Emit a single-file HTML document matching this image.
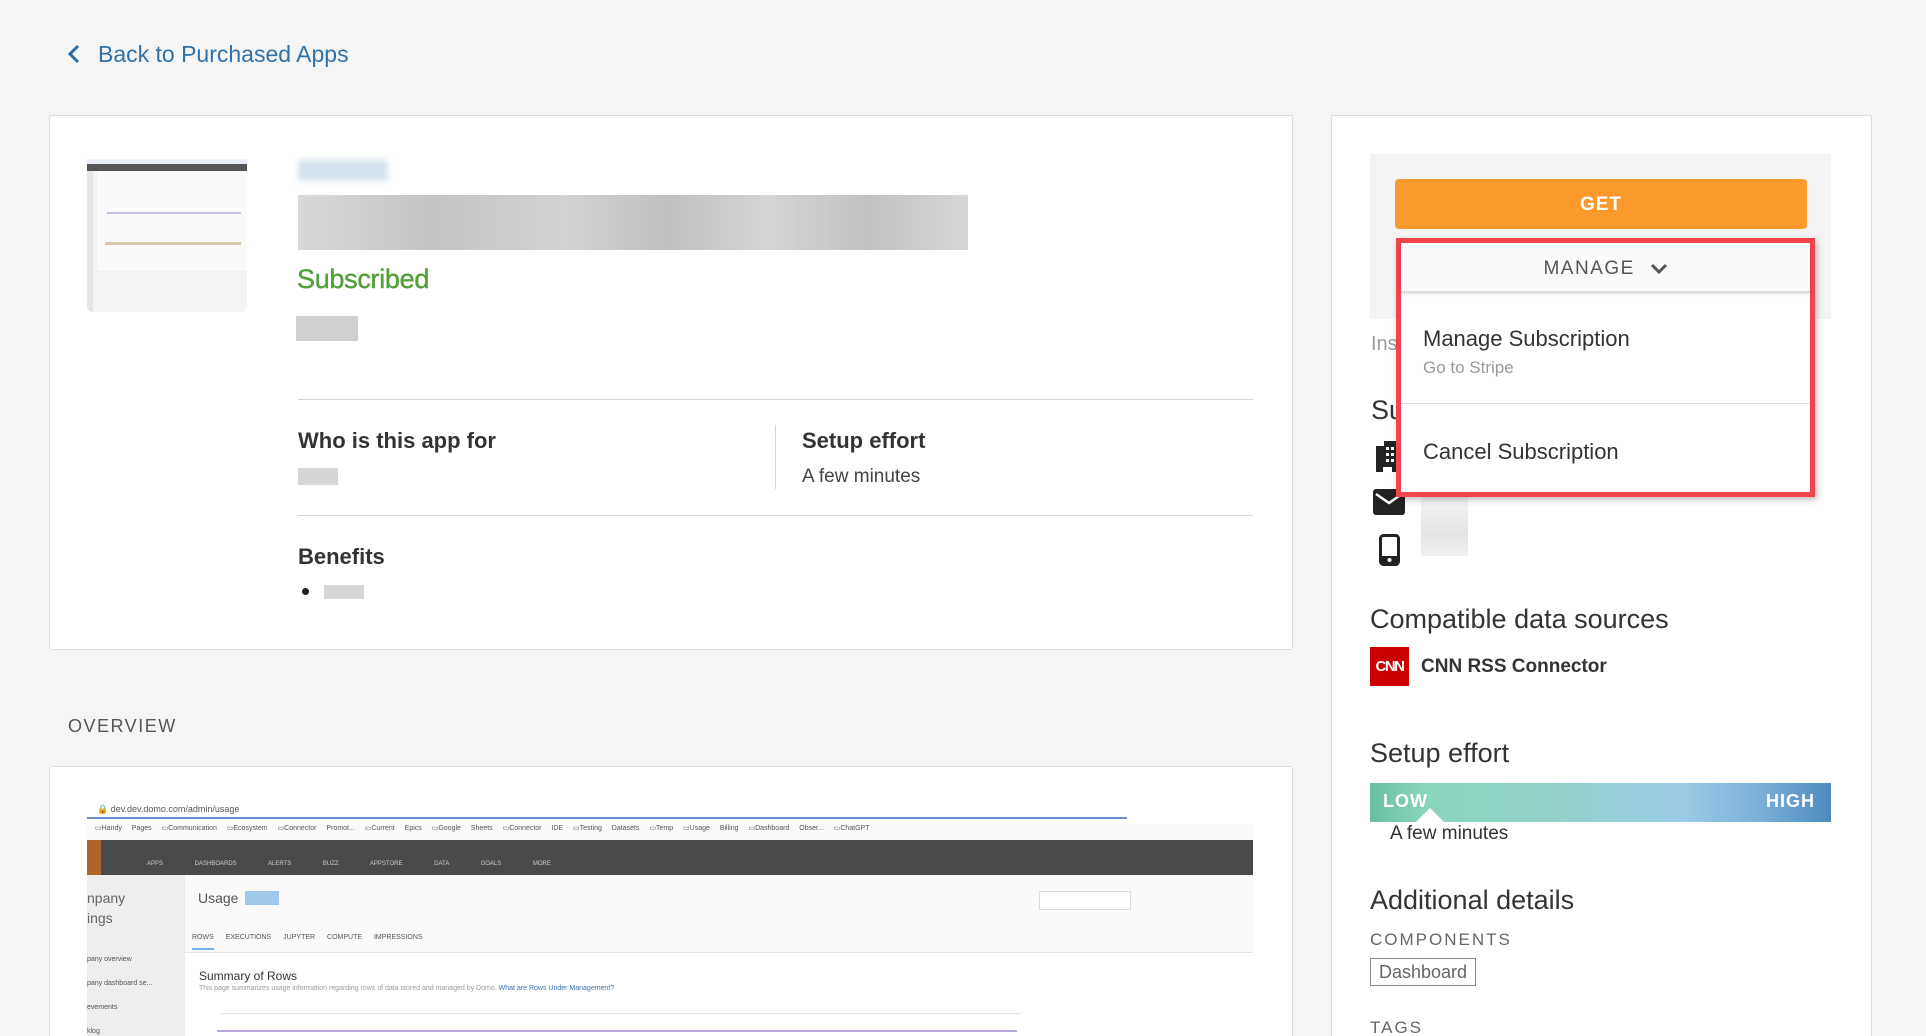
<!DOCTYPE html>
<html><head><meta charset="utf-8"><style>
*{box-sizing:border-box;margin:0;padding:0}
html,body{width:1926px;height:1036px;overflow:hidden}
body{background:#f5f5f5;font-family:"Liberation Sans",sans-serif;color:#333;position:relative}
.a{position:absolute}
.card{background:#fff;border:1px solid #dcdcdc;border-radius:3px}
.h{font-size:27px;color:#333;white-space:nowrap}
.lbl{font-size:22px;font-weight:bold;color:#333;white-space:nowrap}
.blur{filter:blur(3px)}
</style></head><body>

<svg class="a" style="left:66px;top:44px" width="16" height="20" viewBox="0 0 16 20"><path d="M12 2 L4 10 L12 18" stroke="#2d6ea3" stroke-width="3" fill="none"/></svg>
<div class="a" style="left:98px;top:41px;font-size:23px;color:#2f72a8">Back to Purchased Apps</div>

<div class="a card" style="left:49px;top:115px;width:1244px;height:535px"></div>
<div class="a" style="left:87px;top:154px;width:160px;height:158px;background:#f3f3f3;border-radius:6px;overflow:hidden">
 <div class="a" style="left:0;top:0;width:160px;height:5px;background:#fff"></div>
 <div class="a" style="left:0;top:6px;width:160px;height:4px;background:#e8eef5"></div>
 <div class="a" style="left:0;top:10px;width:160px;height:7px;background:#555"></div>
 <div class="a" style="left:10px;top:17px;width:150px;height:100px;background:#fafafa"></div>
 <div class="a" style="left:20px;top:58px;width:134px;height:2px;background:#c8c0e8"></div>
 <div class="a" style="left:18px;top:88px;width:136px;height:3px;background:#d8c7a8"></div>
 <div class="a" style="left:0;top:17px;width:6px;height:141px;background:#e6e6e6"></div>
</div>
<div class="a blur" style="left:298px;top:160px;width:90px;height:21px;background:#d3e2ec"></div>
<div class="a" style="left:298px;top:195px;width:670px;height:55px;background:linear-gradient(90deg,#d8d8d8,#c4c4c4 20%,#d2d2d2 40%,#c0c0c0 55%,#d4d4d4 70%,#c2c2c2 85%,#d6d6d6)"></div>
<div class="a" style="left:297px;top:264px;font-size:27px;color:#51a03a;letter-spacing:-0.3px;-webkit-text-stroke:0.4px #51a03a">Subscribed</div>
<div class="a" style="left:296px;top:316px;width:62px;height:25px;background:#cfcfcf"></div>
<div class="a" style="left:298px;top:399px;width:955px;height:1px;background:#d6d6d6"></div>
<div class="a lbl" style="left:298px;top:428px">Who is this app for</div>
<div class="a" style="left:298px;top:468px;width:40px;height:17px;background:#d6d6d6"></div>
<div class="a" style="left:775px;top:425px;width:1px;height:64px;background:#d6d6d6"></div>
<div class="a lbl" style="left:802px;top:428px">Setup effort</div>
<div class="a" style="left:802px;top:466px;font-size:19px;color:#444">A few minutes</div>
<div class="a" style="left:298px;top:515px;width:955px;height:1px;background:#d6d6d6"></div>
<div class="a lbl" style="left:298px;top:544px">Benefits</div>
<div class="a" style="left:302px;top:588px;width:7px;height:7px;border-radius:50%;background:#222"></div>
<div class="a" style="left:324px;top:585px;width:40px;height:14px;background:#d6d6d6"></div>

<div class="a" style="left:68px;top:716px;font-size:18px;letter-spacing:1.5px;color:#555">OVERVIEW</div>
<div class="a" style="left:49px;top:766px;width:1244px;height:280px;background:#fff;border:1px solid #dcdcdc;border-bottom:none;border-radius:3px 3px 0 0"></div>
<div class="a" style="left:87px;top:798px;width:1166px;height:238px;overflow:hidden;background:#fafafa;font-size:8px;color:#555">
 <div class="a" style="left:0;top:0;width:1166px;height:26px;background:#fff"></div>
 <div class="a" style="left:10px;top:6px;font-size:9px">🔒 dev.dev.domo.com/admin/usage</div>
 <div class="a" style="left:0;top:19px;width:1040px;height:2px;background:#6a8ed8"></div>
 <div class="a" style="left:8px;top:26px;font-size:7px;white-space:nowrap;word-spacing:8px">▭Handy Pages ▭Communication ▭Ecosystem ▭Connector Promot... ▭Current Epics ▭Google Sheets ▭Connector IDE ▭Testing Datasets ▭Temp ▭Usage Billing ▭Dashboard Obser... ▭ChatGPT</div>
 <div class="a" style="left:0;top:42px;width:1166px;height:35px;background:#4a4a4a"></div>
 <div class="a" style="left:0;top:42px;width:14px;height:35px;background:#b0652a"></div>
 <div class="a" style="left:60px;top:63px;font-size:6px;color:#ccc;word-spacing:30px;white-space:nowrap">APPS DASHBOARDS ALERTS BUZZ APPSTORE DATA GOALS MORE</div>
 <div class="a" style="left:0;top:77px;width:98px;height:170px;background:#eee"></div>
 <div class="a" style="left:0;top:90px;font-size:14px;color:#666;line-height:20px">npany<br>ings</div>
 <div class="a" style="left:0;top:150px;font-size:7px;line-height:24px">pany overview<br>pany dashboard se...<br>evements<br>klog</div>
 <div class="a" style="left:98px;top:77px;width:1068px;height:170px;background:#fafafa"></div>
 <div class="a" style="left:111px;top:92px;font-size:14px;color:#555">Usage</div>
 <div class="a" style="left:158px;top:93px;width:34px;height:14px;background:#9fc8ea"></div>
 <div class="a" style="left:952px;top:93px;width:92px;height:19px;background:#fff;border:1px solid #ddd"></div>
 <div class="a" style="left:105px;top:136px;font-size:7px;word-spacing:10px">ROWS EXECUTIONS JUPYTER&nbsp;COMPUTE IMPRESSIONS</div>
 <div class="a" style="left:105px;top:150px;width:22px;height:2px;background:#7ab4e6"></div>
 <div class="a" style="left:98px;top:154px;width:1068px;height:90px;background:#fff;border-top:1px solid #e4e4e4"></div>
 <div class="a" style="left:112px;top:171px;font-size:12px;color:#333">Summary of Rows</div>
 <div class="a" style="left:112px;top:187px;font-size:7px;color:#999">This page summarizes usage information regarding rows of data stored and managed by Domo. <span style="color:#3b6fb0">What are Rows Under Management?</span></div>
 <div class="a" style="left:134px;top:215px;width:800px;height:1px;background:#e4e4e4"></div>
 <div class="a" style="left:130px;top:232px;width:800px;height:2px;background:#b9a6e0"></div>
</div>

<div class="a" style="left:1331px;top:115px;width:541px;height:931px;background:#fff;border:1px solid #dcdcdc;border-bottom:none;border-radius:3px 3px 0 0"></div>
<div class="a" style="left:1370px;top:154px;width:461px;height:165px;background:#f4f4f4"></div>
<div class="a" style="left:1395px;top:179px;width:412px;height:50px;background:#fb9a2b;border-radius:4px;color:#fff;font-weight:bold;font-size:19px;text-align:center;line-height:52px;letter-spacing:1px">GET</div>
<div class="a" style="left:1371px;top:333px;font-size:20px;color:#999">Ins</div>
<div class="a h" style="left:1371px;top:395px">Su</div>
<svg class="a" style="left:1376px;top:441px" width="23" height="31" viewBox="0 0 23 31"><path d="M0 5 L8 5 L8 0 L23 0 L23 31 L16 31 L16 26 L7 26 L7 31 L0 31 Z" fill="#222"/><g fill="#fff"><rect x="10" y="6" width="3" height="3"/><rect x="15" y="6" width="3" height="3"/><rect x="10" y="12" width="3" height="3"/><rect x="15" y="12" width="3" height="3"/><rect x="10" y="18" width="3" height="3"/><rect x="15" y="18" width="3" height="3"/></g></svg>
<svg class="a" style="left:1373px;top:489px" width="32" height="26" viewBox="0 0 32 26"><rect x="0" y="0" width="32" height="26" rx="3" fill="#222"/><path d="M3 5 L16 14 L29 5" stroke="#fff" stroke-width="2.5" fill="none"/></svg>
<svg class="a" style="left:1379px;top:534px" width="21" height="32" viewBox="0 0 21 32"><rect x="1.5" y="1.5" width="18" height="29" rx="3" fill="none" stroke="#222" stroke-width="3"/><rect x="1.5" y="22" width="18" height="8" fill="#222"/><circle cx="10.5" cy="26" r="2" fill="#fff"/></svg>
<div class="a" style="left:1421px;top:485px;width:47px;height:71px;background:linear-gradient(180deg,#fafafa,#e4e4e4 70%,#f0f0f0)"></div>

<div class="a" style="left:1396px;top:238px;width:419px;height:259px;border:5px solid #f0454d;background:#fff;box-shadow:2px 3px 6px rgba(0,0,0,.25)">
 <div class="a" style="left:0;top:0;width:409px;height:50px;background:#fafafa;border-bottom:2px solid #ddd;box-shadow:0 1px 3px rgba(0,0,0,.15);text-align:center;line-height:52px;font-size:19px;letter-spacing:1.5px;color:#555">MANAGE <svg style="vertical-align:middle;margin-left:8px" width="18" height="12" viewBox="0 0 18 12"><path d="M2 2 L9 9 L16 2" stroke="#555" stroke-width="3" fill="none"/></svg></div>
 <div class="a" style="left:22px;top:83px;font-size:22px;color:#333">Manage Subscription</div>
 <div class="a" style="left:22px;top:115px;font-size:17px;color:#999">Go to Stripe</div>
 <div class="a" style="left:0;top:160px;width:409px;height:1px;background:#ddd"></div>
 <div class="a" style="left:22px;top:196px;font-size:22px;color:#333">Cancel Subscription</div>
</div>

<div class="a h" style="left:1370px;top:604px">Compatible data sources</div>
<div class="a" style="left:1370px;top:647px;width:39px;height:39px;background:#cc0000;color:#fff;font-weight:bold;font-size:15px;line-height:39px;text-align:center;letter-spacing:-1.5px">CNN</div>
<div class="a" style="left:1421px;top:656px;font-size:19px;font-weight:bold;color:#333">CNN RSS Connector</div>
<div class="a h" style="left:1370px;top:738px">Setup effort</div>
<div class="a" style="left:1370px;top:783px;width:461px;height:39px;background:linear-gradient(90deg,#66bfa0,#8ad5bd 12%,#93d2c9 40%,#9ccbe7 68%,#79aed8 85%,#4d8bbf)"></div>
<div class="a" style="left:1383px;top:791px;font-size:18px;font-weight:bold;color:#fff;letter-spacing:1px">LOW</div>
<div class="a" style="left:1766px;top:791px;font-size:18px;font-weight:bold;color:#fff;letter-spacing:1px">HIGH</div>
<div class="a" style="left:1416px;top:808px;width:0;height:0;border-left:14px solid transparent;border-right:14px solid transparent;border-bottom:14px solid #fff"></div>
<div class="a" style="left:1390px;top:823px;font-size:19px;color:#333">A few minutes</div>
<div class="a h" style="left:1370px;top:885px">Additional details</div>
<div class="a" style="left:1370px;top:930px;font-size:17px;letter-spacing:2px;color:#666">COMPONENTS</div>
<div class="a" style="left:1370px;top:958px;width:106px;height:28px;border:1px solid #888;font-size:18px;color:#666;line-height:26px;text-align:center">Dashboard</div>
<div class="a" style="left:1370px;top:1018px;font-size:17px;letter-spacing:2px;color:#666">TAGS</div>
</body></html>
